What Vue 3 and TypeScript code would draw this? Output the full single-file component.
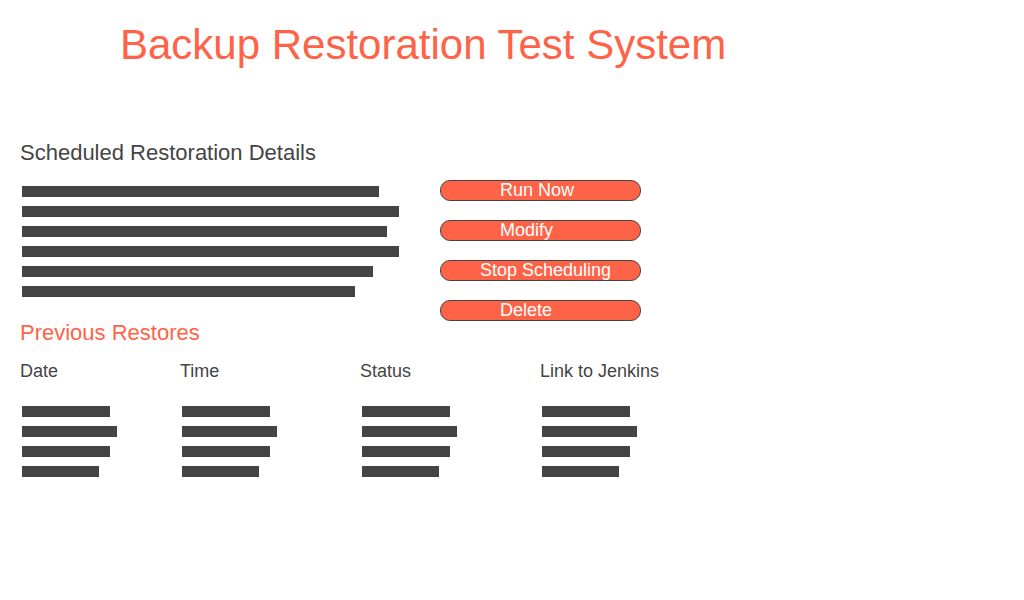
<script setup lang="ts">
interface Action {
  label: string
  wide?: boolean
}

const detailLines: number[] = [357, 377, 365, 377, 351, 333]
const actions: Action[] = [
  { label: 'Run Now' },
  { label: 'Modify' },
  { label: 'Stop Scheduling', wide: true },
  { label: 'Delete' },
]
const columns: string[] = ['Date', 'Time', 'Status', 'Link to Jenkins']
const restoreRows: number[] = [88, 95, 88, 77]
</script>

<template>
  <main class="page">
    <h1 class="title">Backup Restoration Test System</h1>

    <section>
      <h2 class="heading">Scheduled Restoration Details</h2>
      <div class="schedule">
        <div class="details">
          <div v-for="(width, i) in detailLines" :key="i" class="line">
            <span class="bar" :style="{ width: width + 'px' }"></span>
          </div>
        </div>
        <div class="actions">
          <button
            v-for="action in actions"
            :key="action.label"
            type="button"
            class="action"
            :class="{ wide: action.wide }"
          >
            {{ action.label }}
          </button>
        </div>
      </div>
    </section>

    <section>
      <h2 id="restores" class="heading accent">Previous Restores</h2>
      <table class="restores" aria-labelledby="restores">
        <thead>
          <tr>
            <th v-for="column in columns" :key="column" scope="col">{{ column }}</th>
          </tr>
        </thead>
        <tbody>
          <tr v-for="(width, i) in restoreRows" :key="i">
            <td v-for="column in columns" :key="column">
              <span class="bar" :style="{ width: width + 'px' }"></span>
            </td>
          </tr>
        </tbody>
      </table>
    </section>
  </main>
</template>

<style>
body {
  margin: 0;
  background: #ffffff;
}
</style>

<style scoped>
.page {
  padding: 20px;
  color: #444444;
  font-family: "Liberation Sans", Arial, sans-serif;
  font-size: 18px;
}

.title {
  margin: 0 0 71px;
  padding-left: 100px;
  color: #ff6347;
  font-size: 42px;
  font-weight: 400;
  line-height: 50px;
}

.heading {
  margin: 0;
  font-size: 22px;
  font-weight: 400;
  line-height: 24px;
}

.accent {
  color: #ff6347;
}

.schedule {
  display: grid;
  grid-template-columns: minmax(0, 400px) 201px;
  column-gap: 20px;
  padding-top: 15px;
}

.details {
  padding-top: 1px;
}

.line {
  display: flex;
  align-items: center;
  height: 20px;
  padding: 1px 0 0 2px;
  box-sizing: border-box;
}

.bar {
  display: block;
  height: 11px;
  background: #444444;
}

.actions {
  display: flex;
  flex-direction: column;
  gap: 19px;
}

.action {
  width: 100%;
  height: 21px;
  padding: 0 0 0 59px;
  box-sizing: border-box;
  border: 1px solid #444444;
  border-radius: 10px;
  background: #ff6347;
  color: #ffffff;
  font: inherit;
  line-height: 19px;
  text-align: left;
  white-space: nowrap;
  cursor: pointer;
}

.action.wide {
  padding-left: 39px;
}

.restores {
  margin-top: 15px;
  border-collapse: collapse;
}

th {
  height: 41px;
  min-width: 180px;
  padding: 0;
  font-weight: 400;
  line-height: 22px;
  text-align: left;
  vertical-align: top;
}

th:first-child {
  min-width: 160px;
}

td {
  height: 20px;
  padding: 0 0 0 2px;
  vertical-align: middle;
}
</style>
